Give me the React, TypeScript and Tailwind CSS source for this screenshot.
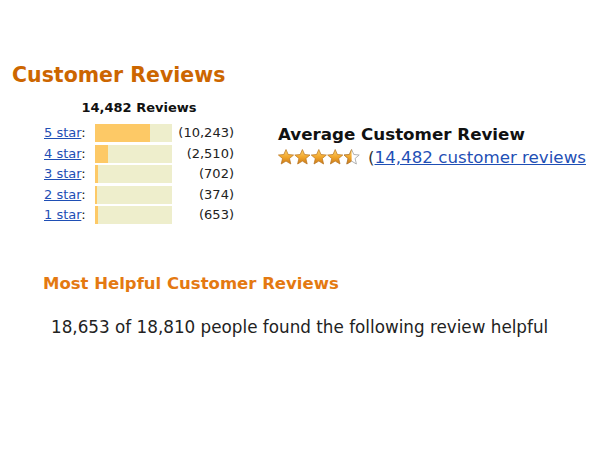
import React from 'react';

const rows = [
  { label: '5 star', count: '(10,243)', fill: 55 },
  { label: '4 star', count: '(2,510)', fill: 13 },
  { label: '3 star', count: '(702)', fill: 3 },
  { label: '2 star', count: '(374)', fill: 2 },
  { label: '1 star', count: '(653)', fill: 3 },
];

const STAR = 'M8 0.5 L10.2 5.5 L15.6 6 L11.5 9.5 L12.8 15 L8 12.1 L3.2 15 L4.5 9.5 L0.4 6 L5.8 5.5 Z';

function Stars() {
  return (
    <svg width="82" height="16" viewBox="0 0 82 16">
      <defs>
        <linearGradient id="gold" x1="0" y1="0" x2="0" y2="1">
          <stop offset="0" stopColor="#ffd36a" />
          <stop offset="0.55" stopColor="#f0a429" />
          <stop offset="1" stopColor="#c9781a" />
        </linearGradient>
        <clipPath id="half">
          <rect x="0" y="0" width="8" height="16" />
        </clipPath>
      </defs>
      {[0, 1, 2, 3].map((i) => (
        <path key={i} d={STAR} transform={`translate(${i * 16.4} 0)`} fill="url(#gold)" stroke="#b8731c" strokeWidth="0.7" />
      ))}
      <g transform="translate(65.6 0)">
        <path d={STAR} fill="#fff" stroke="#a0a0a0" strokeWidth="0.8" />
        <path d={STAR} fill="url(#gold)" stroke="#b8731c" strokeWidth="0.7" clipPath="url(#half)" />
      </g>
    </svg>
  );
}

export default function App() {
  return (
    <div className="w-[600px] h-[450px] bg-white pt-[63px] text-[#111]" style={{ fontFamily: '"DejaVu Sans", Verdana, sans-serif' }}>
      <h1 className="pl-3 text-[20.5px] leading-6 font-bold text-[#cc6600]">Customer Reviews</h1>

      <div className="flex mt-[13px]">
        <div className="pl-[44px] w-[278px]">
          <div className="w-[190px] text-center text-[13px] leading-4 font-bold">14,482 Reviews</div>
          <div className="mt-[8px] flex flex-col gap-[2.5px]">
            {rows.map((r) => (
              <div key={r.label} className="flex items-center h-[18px] text-[13px]">
                <span className="w-[51px]">
                  <a href="#" className="text-[#1f4fb5] underline">{r.label}</a>:
                </span>
                <div className="w-[77px] h-[18px] bg-[#eeeecc] flex">
                  <div className="h-full bg-[#fdc966]" style={{ width: r.fill }} />
                </div>
                <span className="w-[62px] text-right text-[#222]">{r.count}</span>
              </div>
            ))}
          </div>
        </div>

        <div className="pt-[24px]">
          <div className="text-[16.7px] leading-5 font-bold">Average Customer Review</div>
          <div className="flex items-center mt-[3px] text-[16.7px] leading-5">
            <Stars />
            <span className="ml-[8px] text-[#333]">(</span>
            <a href="#" className="text-[#1f4fb5] underline">14,482 customer reviews</a>
          </div>
        </div>
      </div>

      <h2 className="mt-[50px] pl-[43px] text-[16.5px] leading-5 font-bold text-[#e47911]">Most Helpful Customer Reviews</h2>
      <p className="mt-[23px] pl-[51px] text-[16.8px] leading-5 text-[#222]">
        18,653 of 18,810 people found the following review helpful
      </p>
    </div>
  );
}
